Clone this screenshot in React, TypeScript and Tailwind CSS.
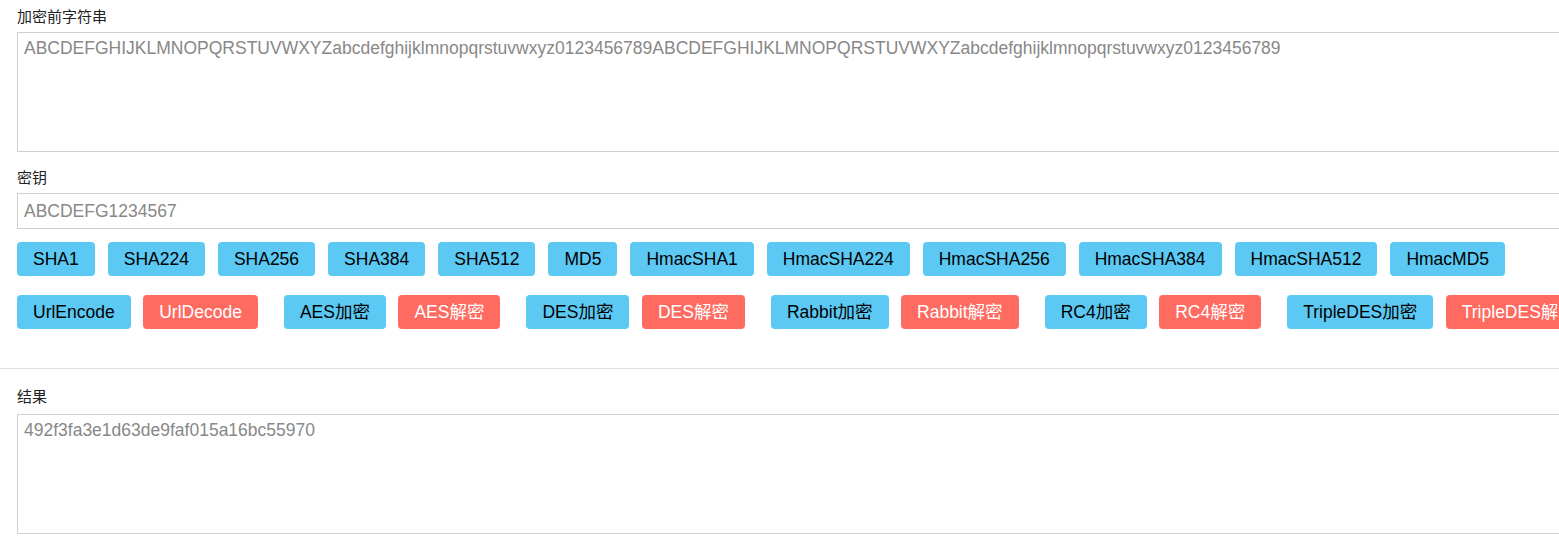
import React from 'react'

const font = "font-['Liberation_Sans','Noto_Sans_CJK_SC',sans-serif]"

const hashButtons = [
  'SHA1',
  'SHA224',
  'SHA256',
  'SHA384',
  'SHA512',
  'MD5',
  'HmacSHA1',
  'HmacSHA224',
  'HmacSHA256',
  'HmacSHA384',
  'HmacSHA512',
  'HmacMD5',
]

const cipherPairs = [
  ['UrlEncode', 'UrlDecode'],
  ['AES加密', 'AES解密'],
  ['DES加密', 'DES解密'],
  ['Rabbit加密', 'Rabbit解密'],
  ['RC4加密', 'RC4解密'],
  ['TripleDES加密', 'TripleDES解密'],
]

const Btn = ({ label, danger }: { label: string; danger?: boolean }) => (
  <button
    className={
      danger
        ? 'h-[34px] shrink-0 whitespace-nowrap rounded-[4px] bg-[#ff6b61] px-4 text-[17.5px] text-white'
        : 'h-[34px] shrink-0 whitespace-nowrap rounded-[4px] bg-[#5bc9f3] px-4 text-[17.5px] text-black'
    }
  >
    {label}
  </button>
)

const Label = ({ children }: { children: React.ReactNode }) => (
  <p className="text-[15px] leading-[20px] text-[#222]">{children}</p>
)

export default function App() {
  const [plain, setPlain] = React.useState(
    'ABCDEFGHIJKLMNOPQRSTUVWXYZabcdefghijklmnopqrstuvwxyz0123456789ABCDEFGHIJKLMNOPQRSTUVWXYZabcdefghijklmnopqrstuvwxyz0123456789'
  )
  const [secret, setSecret] = React.useState('ABCDEFG1234567')
  const [result, setResult] = React.useState('492f3fa3e1d63de9faf015a16bc55970')

  return (
    <div className={`w-full overflow-hidden bg-white pb-2 ${font}`}>
      <div className="pl-[17px]">
        <div className="pt-[7px]">
          <Label>加密前字符串</Label>
          <textarea
            value={plain}
            onChange={(e) => setPlain(e.target.value)}
            className="mt-[5px] block h-[120px] w-[1560px] resize-none border border-[#cfcfcf] px-[6px] py-[5px] text-[17.5px] leading-[21px] text-[#888] outline-none"
          />
        </div>

        <div className="mt-[16px]">
          <Label>密钥</Label>
          <input
            type="text"
            value={secret}
            onChange={(e) => setSecret(e.target.value)}
            className="mt-[5px] block h-[36px] w-[1560px] border border-[#cfcfcf] px-[6px] text-[17.5px] text-[#888] outline-none"
          />
        </div>

        <div className="mt-[13px] flex gap-[13px]">
          {hashButtons.map((b) => (
            <Btn key={b} label={b} />
          ))}
        </div>

        {/* encode / decode pairs sit a bit further apart than the buttons inside a pair */}
        <div className="mt-[19px] flex gap-[26px]">
          {cipherPairs.map(([enc, dec]) => (
            <div key={enc} className="flex shrink-0 gap-[12.5px]">
              <Btn label={enc} />
              <Btn label={dec} danger />
            </div>
          ))}
        </div>
      </div>

      <div className="mt-[39px] border-t border-[#ddd]" />

      <div className="pl-[17px] pt-[18px]">
        <Label>结果</Label>
        <textarea
          value={result}
          onChange={(e) => setResult(e.target.value)}
          className="mt-[7px] block h-[120px] w-[1560px] resize-none border border-[#cfcfcf] px-[6px] py-[5px] text-[17.5px] leading-[21px] text-[#888] outline-none"
        />
      </div>
    </div>
  )
}
